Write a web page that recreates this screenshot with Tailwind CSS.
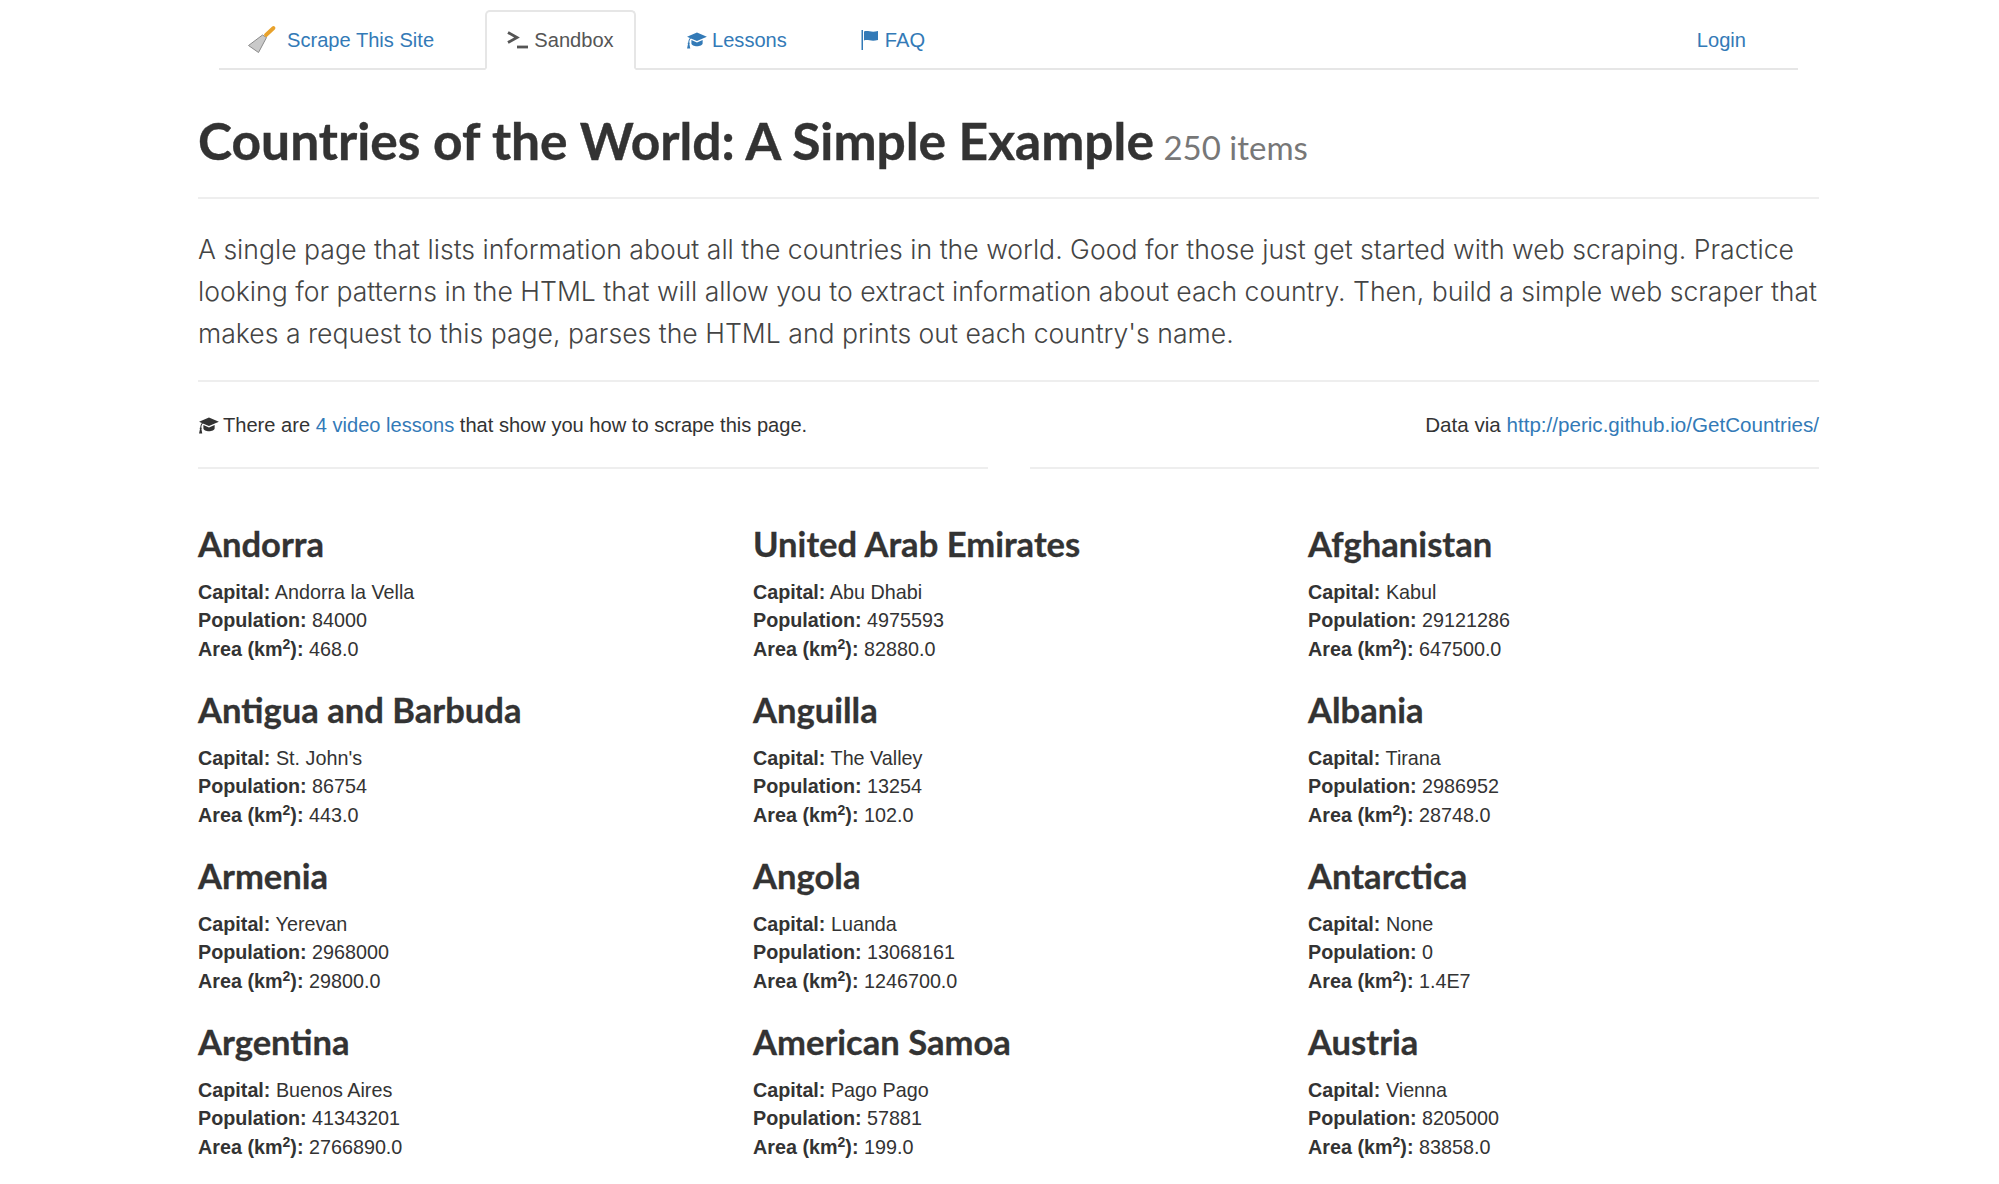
<!DOCTYPE html>
<html>
<head>
  <meta charset="UTF-8">
  <title>Countries of the World: A Simple Example | Scrape This Site</title>
  <script src="https://cdn.jsdelivr.net/npm/@tailwindcss/browser@4"></script>
</head>
<body class="bg-white font-['Liberation_Sans',Arial,sans-serif] text-[19.75px] leading-[28.4px] text-[#333]">

<div class="ml-[198px] w-[1621px]">

  <!-- nav tabs -->
  <nav class="mx-[21px] mt-[10px] h-[60px] flex border-b-2 border-[#e6e6e6] text-[#337ab7] text-[20.1px]">
    <a class="flex items-center h-[60px] w-[266px] pl-[28px] gap-[10px]">
      <svg width="30" height="30" viewBox="0 0 30 30" class="shrink-0">
        <path d="M15.5 10 L1.5 20.5 L11.5 27.5 L19.5 12.5 Z" fill="#c9c9c9" stroke="#8a8a8a" stroke-width="1" stroke-linejoin="round"/>
        <path d="M19 10 L26.5 3" fill="none" stroke="#e8a22c" stroke-width="3.8" stroke-linecap="round"/>
      </svg>
      Scrape This Site
    </a>
    <a class="flex items-center justify-center gap-[6px] w-[151px] h-[60px] bg-white border-2 border-[#e6e6e6] border-b-white rounded-t-[5px] text-[#555]">
      <svg width="21" height="18" viewBox="0 0 21 18" class="shrink-0"><path d="M1 1.5 L10 6.5 L1 11.5" fill="none" stroke="#555" stroke-width="2.8"/><path d="M10 16 H21" stroke="#555" stroke-width="2.8"/></svg>
      Sandbox
    </a>
    <a class="flex items-center h-[60px] ml-[50px] gap-[5px]">
      <svg width="21" height="17" viewBox="0 0 22 18" class="shrink-0" fill="#337ab7">
        <path d="M11.5 0.5 L22 5 L11.5 9.5 L5 7 C3.8 8 3.5 9.5 3.4 11 C4 11.4 4 12.3 3.5 12.7 L4.4 17.5 H1 L2 12.7 C1.5 12.2 1.6 11.3 2.3 11 C2.4 9.2 2.9 7.6 4 6.3 L1 5 Z"/>
        <path d="M5.6 8.6 L11.5 11 L17.5 8.4 V12 C17.5 14 14.5 15.2 11.5 15.2 C8.5 15.2 5.6 14 5.6 12 Z"/>
      </svg>
      Lessons
    </a>
    <a class="flex items-center h-[60px] ml-[74px] gap-[6px]">
      <svg width="18" height="20" viewBox="0 0 18 20" class="shrink-0" fill="#337ab7">
        <path d="M0.5 0 H2 V20 H0.5 Z"/>
        <path d="M3 1.5 C7 0 10 3 17 1 V10 C10 12 7 9 3 10.5 Z"/>
      </svg>
      FAQ
    </a>
    <a class="flex items-center h-[60px] ml-auto mr-[52px]">Login</a>
  </nav>

  <!-- page title -->
  <div class="mt-[40px] h-[89px] border-b-2 border-[#eee]">
    <h1 class="font-['Lato',sans-serif] font-bold text-[51.5px] leading-[60px] text-[#333] [-webkit-text-stroke:0.4px_#333]">Countries of the World: A Simple Example <small class="-ml-[3px] font-normal text-[33px] text-[#777] [-webkit-text-stroke:0]">250 items</small></h1>
  </div>

  <p class="mt-[29px] font-['Inter',sans-serif] font-light text-[26.6px] leading-[42px] text-[#444]">A single page that lists information about all the countries in the world. Good for those just get started with web scraping. Practice looking for patterns in the HTML that will allow you to extract information about each country. Then, build a simple web scraper that makes a request to this page, parses the HTML and prints out each country's name.</p>

  <hr class="mt-[26px] border-t-2 border-[#eee]">

  <!-- lessons / data source -->
  <div class="mt-[29px] grid grid-cols-2 gap-[42px]">
    <div class="pb-[28px] border-b-2 border-[#eee] text-[20.1px]">
      <div class="flex items-center gap-[4px] h-[28px]">
        <svg width="21" height="17" viewBox="0 0 22 18" class="shrink-0" fill="#333">
          <path d="M11.5 0.5 L22 5 L11.5 9.5 L5 7 C3.8 8 3.5 9.5 3.4 11 C4 11.4 4 12.3 3.5 12.7 L4.4 17.5 H1 L2 12.7 C1.5 12.2 1.6 11.3 2.3 11 C2.4 9.2 2.9 7.6 4 6.3 L1 5 Z"/>
          <path d="M5.6 8.6 L11.5 11 L17.5 8.4 V12 C17.5 14 14.5 15.2 11.5 15.2 C8.5 15.2 5.6 14 5.6 12 Z"/>
        </svg>
        <span>There are <a class="text-[#337ab7]">4 video lessons</a> that show you how to scrape this page.</span>
      </div>
    </div>
    <div class="pb-[28px] border-b-2 border-[#eee] text-right text-[20.6px]">
      <div class="h-[28px]">Data via <a class="text-[#337ab7]">http://peric.github.io/GetCountries/</a></div>
    </div>
  </div>

  <!-- countries -->
  <div class="mt-[54px] grid grid-cols-[555px_555px_1fr] auto-rows-[166px]">
    <div>
      <h3 class="font-['Lato',sans-serif] font-bold text-[34.6px] leading-[42px] mb-[13px] [-webkit-text-stroke:0.3px_#333]">Andorra</h3>
      <div><strong>Capital:</strong> Andorra la Vella</div>
      <div><strong>Population:</strong> 84000</div>
      <div><strong>Area (km<sup class="text-[14px]">2</sup>):</strong> 468.0</div>
    </div>
    <div>
      <h3 class="font-['Lato',sans-serif] font-bold text-[34.6px] leading-[42px] mb-[13px] [-webkit-text-stroke:0.3px_#333]">United Arab Emirates</h3>
      <div><strong>Capital:</strong> Abu Dhabi</div>
      <div><strong>Population:</strong> 4975593</div>
      <div><strong>Area (km<sup class="text-[14px]">2</sup>):</strong> 82880.0</div>
    </div>
    <div>
      <h3 class="font-['Lato',sans-serif] font-bold text-[34.6px] leading-[42px] mb-[13px] [-webkit-text-stroke:0.3px_#333]">Afghanistan</h3>
      <div><strong>Capital:</strong> Kabul</div>
      <div><strong>Population:</strong> 29121286</div>
      <div><strong>Area (km<sup class="text-[14px]">2</sup>):</strong> 647500.0</div>
    </div>
    <div>
      <h3 class="font-['Lato',sans-serif] font-bold text-[34.6px] leading-[42px] mb-[13px] [-webkit-text-stroke:0.3px_#333]">Antigua and Barbuda</h3>
      <div><strong>Capital:</strong> St. John's</div>
      <div><strong>Population:</strong> 86754</div>
      <div><strong>Area (km<sup class="text-[14px]">2</sup>):</strong> 443.0</div>
    </div>
    <div>
      <h3 class="font-['Lato',sans-serif] font-bold text-[34.6px] leading-[42px] mb-[13px] [-webkit-text-stroke:0.3px_#333]">Anguilla</h3>
      <div><strong>Capital:</strong> The Valley</div>
      <div><strong>Population:</strong> 13254</div>
      <div><strong>Area (km<sup class="text-[14px]">2</sup>):</strong> 102.0</div>
    </div>
    <div>
      <h3 class="font-['Lato',sans-serif] font-bold text-[34.6px] leading-[42px] mb-[13px] [-webkit-text-stroke:0.3px_#333]">Albania</h3>
      <div><strong>Capital:</strong> Tirana</div>
      <div><strong>Population:</strong> 2986952</div>
      <div><strong>Area (km<sup class="text-[14px]">2</sup>):</strong> 28748.0</div>
    </div>
    <div>
      <h3 class="font-['Lato',sans-serif] font-bold text-[34.6px] leading-[42px] mb-[13px] [-webkit-text-stroke:0.3px_#333]">Armenia</h3>
      <div><strong>Capital:</strong> Yerevan</div>
      <div><strong>Population:</strong> 2968000</div>
      <div><strong>Area (km<sup class="text-[14px]">2</sup>):</strong> 29800.0</div>
    </div>
    <div>
      <h3 class="font-['Lato',sans-serif] font-bold text-[34.6px] leading-[42px] mb-[13px] [-webkit-text-stroke:0.3px_#333]">Angola</h3>
      <div><strong>Capital:</strong> Luanda</div>
      <div><strong>Population:</strong> 13068161</div>
      <div><strong>Area (km<sup class="text-[14px]">2</sup>):</strong> 1246700.0</div>
    </div>
    <div>
      <h3 class="font-['Lato',sans-serif] font-bold text-[34.6px] leading-[42px] mb-[13px] [-webkit-text-stroke:0.3px_#333]">Antarctica</h3>
      <div><strong>Capital:</strong> None</div>
      <div><strong>Population:</strong> 0</div>
      <div><strong>Area (km<sup class="text-[14px]">2</sup>):</strong> 1.4E7</div>
    </div>
    <div>
      <h3 class="font-['Lato',sans-serif] font-bold text-[34.6px] leading-[42px] mb-[13px] [-webkit-text-stroke:0.3px_#333]">Argentina</h3>
      <div><strong>Capital:</strong> Buenos Aires</div>
      <div><strong>Population:</strong> 41343201</div>
      <div><strong>Area (km<sup class="text-[14px]">2</sup>):</strong> 2766890.0</div>
    </div>
    <div>
      <h3 class="font-['Lato',sans-serif] font-bold text-[34.6px] leading-[42px] mb-[13px] [-webkit-text-stroke:0.3px_#333]">American Samoa</h3>
      <div><strong>Capital:</strong> Pago Pago</div>
      <div><strong>Population:</strong> 57881</div>
      <div><strong>Area (km<sup class="text-[14px]">2</sup>):</strong> 199.0</div>
    </div>
    <div>
      <h3 class="font-['Lato',sans-serif] font-bold text-[34.6px] leading-[42px] mb-[13px] [-webkit-text-stroke:0.3px_#333]">Austria</h3>
      <div><strong>Capital:</strong> Vienna</div>
      <div><strong>Population:</strong> 8205000</div>
      <div><strong>Area (km<sup class="text-[14px]">2</sup>):</strong> 83858.0</div>
    </div>
  </div>
</div>

</body>
</html>
